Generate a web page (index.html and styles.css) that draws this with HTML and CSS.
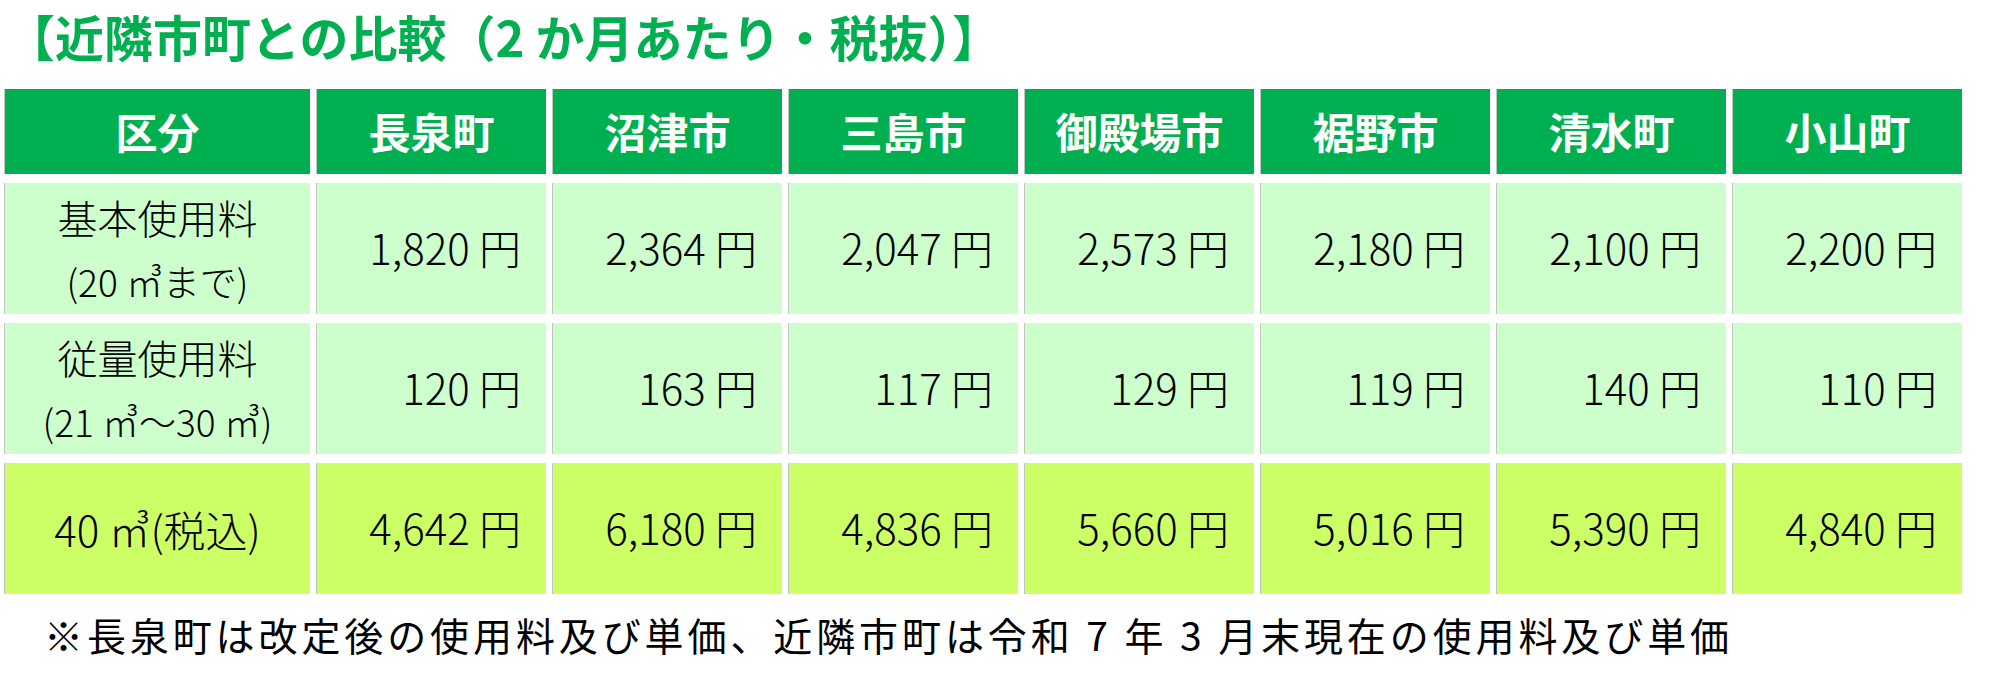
FILE: index.html
```html
<!DOCTYPE html>
<html lang="ja">
<head>
<meta charset="utf-8">
<title>近隣市町との比較</title>
<link rel="stylesheet" href="styles.css">
</head>
<body>
<div class="page">
  <h1 class="title">【近隣市町との比較（2 か月あたり・税抜）】</h1>
  <div class="table">
    <div class="cell head">区分</div>
    <div class="cell head">長泉町</div>
    <div class="cell head">沼津市</div>
    <div class="cell head">三島市</div>
    <div class="cell head">御殿場市</div>
    <div class="cell head">裾野市</div>
    <div class="cell head">清水町</div>
    <div class="cell head">小山町</div>

    <div class="cell light label"><span class="l1">基本使用料</span><span class="l2">(20 ㎥まで)</span></div>
    <div class="cell light num">1,820 円</div>
    <div class="cell light num">2,364 円</div>
    <div class="cell light num">2,047 円</div>
    <div class="cell light num">2,573 円</div>
    <div class="cell light num">2,180 円</div>
    <div class="cell light num">2,100 円</div>
    <div class="cell light num">2,200 円</div>

    <div class="cell light label"><span class="l1">従量使用料</span><span class="l2">(21 ㎥～30 ㎥)</span></div>
    <div class="cell light num">120 円</div>
    <div class="cell light num">163 円</div>
    <div class="cell light num">117 円</div>
    <div class="cell light num">129 円</div>
    <div class="cell light num">119 円</div>
    <div class="cell light num">140 円</div>
    <div class="cell light num">110 円</div>

    <div class="cell lime label"><span class="l3">40 ㎥(税込)</span></div>
    <div class="cell lime num">4,642 円</div>
    <div class="cell lime num">6,180 円</div>
    <div class="cell lime num">4,836 円</div>
    <div class="cell lime num">5,660 円</div>
    <div class="cell lime num">5,016 円</div>
    <div class="cell lime num">5,390 円</div>
    <div class="cell lime num">4,840 円</div>
  </div>
  <p class="note">※長泉町は改定後の使用料及び単価、近隣市町は令和 7 年 3 月末現在の使用料及び単価</p>
</div>
</body>
</html>
```

FILE: styles.css
```css
html, body {
  margin: 0;
  padding: 0;
  background: #ffffff;
}

body {
  font-family: "Noto Sans CJK JP", "Noto Sans", sans-serif;
  color: #000000;
}

.page {
  padding-left: 4px;
}

.title {
  margin: 8px 0 25px 2px;
  font-size: 49px;
  line-height: 56px;
  font-weight: 700;
  color: #00b050;
  white-space: nowrap;
}

.table {
  display: grid;
  grid-template-columns: 306px repeat(7, 230px);
  grid-template-rows: 85px 131px 131px 131px;
  column-gap: 6px;
  row-gap: 9px;
}

.cell {
  display: flex;
  align-items: center;
  border-left: 1px solid #c4c4c4;
  box-sizing: border-box;
}

.head {
  background: #00b050;
  color: #ffffff;
  font-weight: 700;
  font-size: 42px;
  justify-content: center;
  padding-bottom: 2px;
}

.light {
  background: #ccffcc;
}

.lime {
  background: #ccff66;
}

.label {
  flex-direction: column;
  justify-content: center;
  text-align: center;
  font-weight: 300;
}

.l1 {
  display: block;
  font-size: 40px;
  line-height: 64px;
}

.l2 {
  display: block;
  font-size: 37px;
  line-height: 64px;
}

.l3 {
  display: block;
  font-size: 42px;
  line-height: 60px;
}

.num {
  justify-content: flex-end;
  padding-right: 25px;
  padding-bottom: 4px;
  font-size: 42px;
  font-weight: 300;
  white-space: nowrap;
}

.note {
  margin: 15px 0 0 40px;
  font-size: 39px;
  line-height: 50px;
  letter-spacing: 3.9px;
  white-space: nowrap;
}
```
